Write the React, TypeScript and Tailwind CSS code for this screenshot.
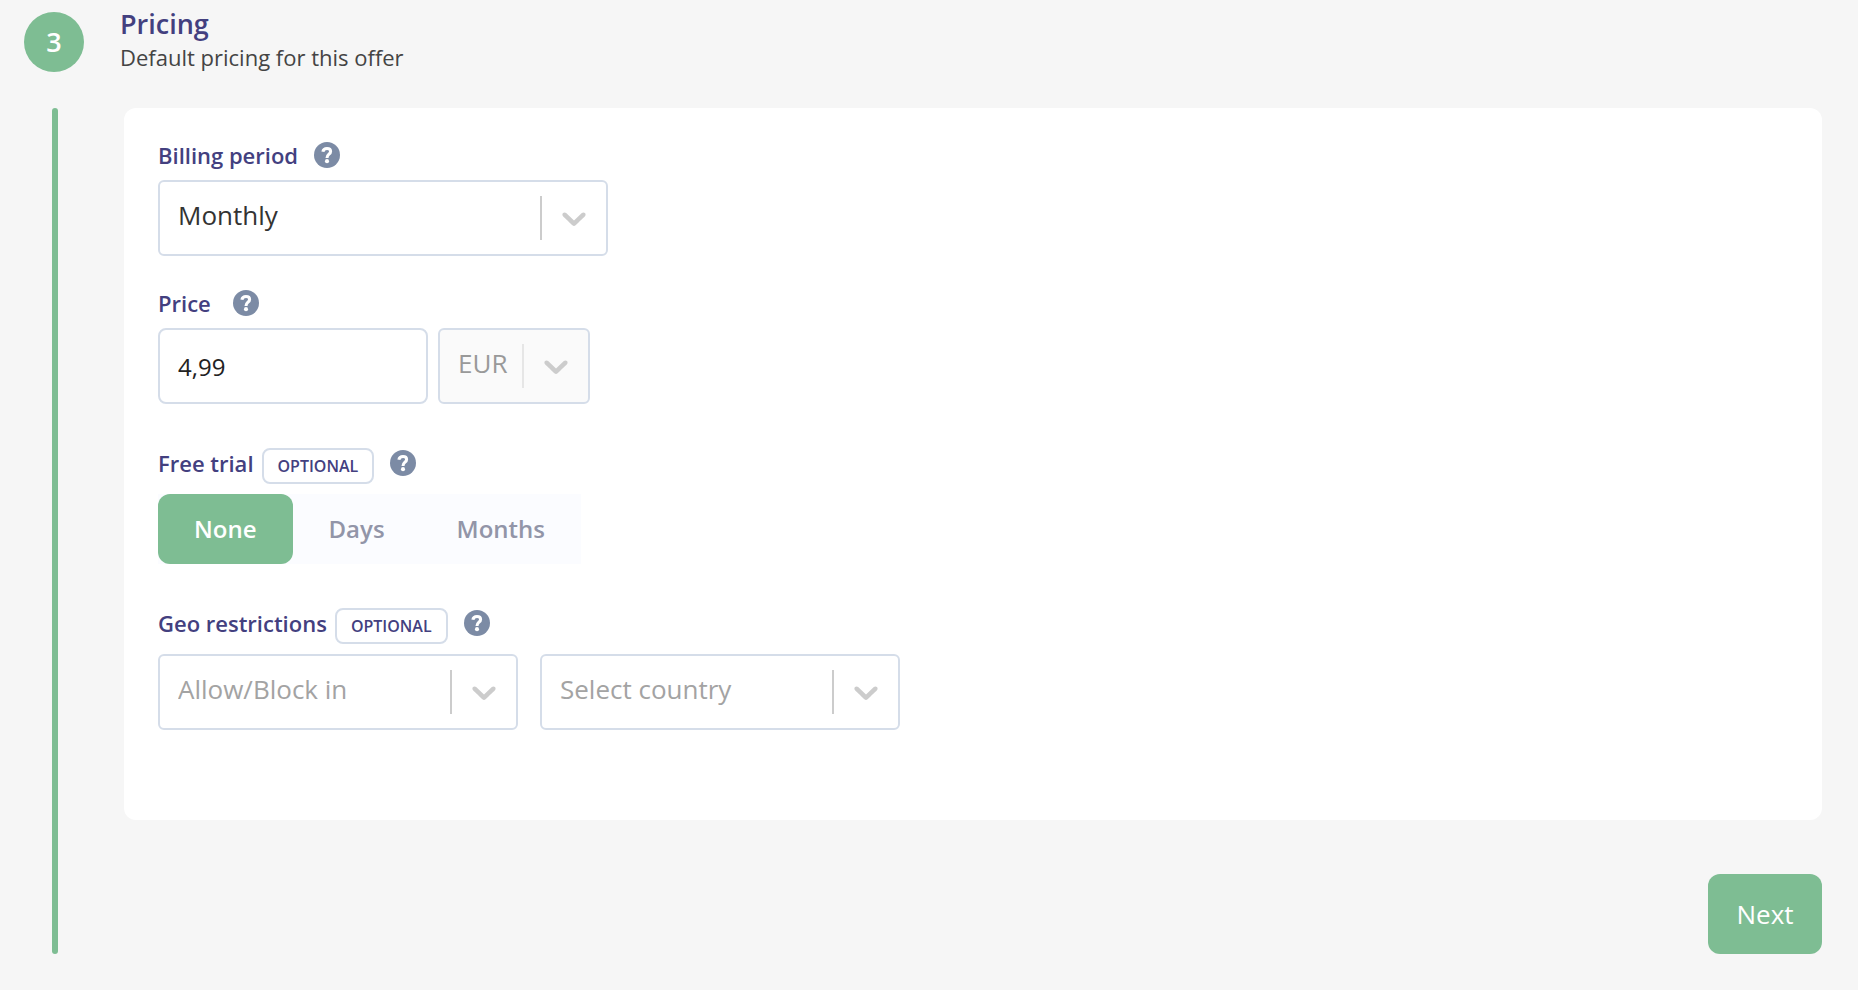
import { useState } from 'react';
import type { ReactNode } from 'react';
import clsx from 'clsx';

const trialOptions = ['None', 'Days', 'Months'];

function Help({ topic }: { topic: string }) {
  return (
    <button type="button" aria-label={`Help: ${topic}`}>
      <svg viewBox="0 0 76 76" className="size-6.5" fill="none" aria-hidden="true">
        <circle cx="38" cy="38" r="38" fill="#7c8ba5" />
        <path
          d="M26 28.5C27 22 32 19 38 19C44.500 19 48.500 22.500 48.500 27.500C48.500 36 38 35.500 38 46.500"
          stroke="white"
          strokeWidth="9"
        />
        <circle cx="38" cy="56" r="6" fill="white" />
      </svg>
    </button>
  );
}

function OptionalBadge() {
  return (
    <span className="mt-1.5 rounded-lg border-2 border-[#d5dde9] px-3.5 text-base leading-8 font-semibold uppercase">
      Optional
    </span>
  );
}

function Select({
  id,
  label,
  options,
  disabled = false,
  placeholder,
  className,
}: {
  id: string;
  label?: string;
  options: string[];
  disabled?: boolean;
  placeholder?: string;
  className: string;
}) {
  const [value, setValue] = useState(placeholder ? '' : options[0]);

  return (
    <div className={clsx('relative', className)}>
      <select
        id={id}
        aria-label={label}
        value={value}
        disabled={disabled}
        onChange={(e) => setValue(e.target.value)}
        className={clsx(
          'h-19 w-full appearance-none rounded-md border-2 border-[#d5dde9] pr-16 pb-1.5 pl-4.5 text-[26px] opacity-100',
          disabled ? 'bg-[#fafafa] text-[#999999]' : 'bg-white',
          !disabled && (value ? 'text-[#333333]' : 'text-[#a3a3a3]')
        )}
      >
        {placeholder && <option value="">{placeholder}</option>}
        {options.map((option) => (
          <option key={option} value={option}>
            {option}
          </option>
        ))}
      </select>
      <div className="pointer-events-none absolute inset-y-0 right-0.5 flex items-center text-[#cccccc]">
        <span className={clsx('h-11 w-0.5', disabled ? 'bg-[#e6e6e6]' : 'bg-[#cccccc]')} />
        <svg viewBox="0 0 20 20" className="mx-3 size-10" fill="currentColor" aria-hidden="true">
          <path d="M4.516 7.548c0.436-0.446 1.043-0.481 1.576 0l3.908 3.747 3.908-3.747c0.533-0.481 1.141-0.446 1.574 0 0.436 0.445 0.408 1.197 0 1.615-0.406 0.418-4.695 4.502-4.695 4.502-0.217 0.223-0.502 0.335-0.787 0.335s-0.57-0.112-0.789-0.335c0 0-4.287-4.084-4.695-4.502s-0.436-1.17 0-1.615z" />
        </svg>
      </div>
    </div>
  );
}

function FieldLabel({ children, className }: { children: ReactNode; className: string }) {
  return (
    <div className={clsx('flex h-9.5 items-center text-[22px] leading-8 font-semibold text-[#43407f]', className)}>
      {children}
    </div>
  );
}

export default function App() {
  const [price, setPrice] = useState('4,99');
  const [trial, setTrial] = useState('None');

  return (
    <div className="min-h-screen bg-[#f6f6f6] px-6 pt-3 pb-9 font-['Open_Sans',sans-serif] text-[#333333]">
      <header className="flex items-start">
        <div className="flex size-15 items-center justify-center rounded-full bg-[#7ebd93] text-[27px] font-semibold text-white">
          3
        </div>
        <div className="ml-9 -mt-1">
          <h2 className="text-[27px] leading-8 font-semibold text-[#43407f]">Pricing</h2>
          <p className="text-[22px] leading-8.5 text-[#444444]">Default pricing for this offer</p>
        </div>
      </header>

      <div className="mt-8.5 flex">
        <div className="ml-7 w-1.5 shrink-0 rounded-full bg-[#7ebd93]" />
        <form className="ml-16.5 mr-3 flex-1" onSubmit={(e) => e.preventDefault()}>
          <div className="rounded-xl bg-white px-8.5 pt-7 pb-22.5">
            <FieldLabel className="mb-1.5">
              <label htmlFor="billing" className="mr-4">
                Billing period
              </label>
              <Help topic="Billing period" />
            </FieldLabel>
            <Select id="billing" options={['Monthly', 'Yearly']} className="w-112.5" />

            <div className="mt-7">
              <FieldLabel className="mb-1.5">
                <label htmlFor="price" className="mr-5.5">
                  Price
                </label>
                <Help topic="Price" />
              </FieldLabel>
              <div className="flex gap-2.5">
                <input
                  id="price"
                  type="text"
                  inputMode="decimal"
                  value={price}
                  onChange={(e) => setPrice(e.target.value)}
                  className="h-19 w-67.5 rounded-lg border-2 border-[#d5dde9] bg-white px-4.5 text-2xl text-[#222222]"
                />
                <Select id="currency" label="Currency" options={['EUR']} disabled className="w-38" />
              </div>
            </div>

            <div className="mt-10">
              <FieldLabel className="mb-3">
                <span id="trial-label" className="mr-2">
                  Free trial
                </span>
                <OptionalBadge />
                <span className="ml-4 flex">
                  <Help topic="Free trial" />
                </span>
              </FieldLabel>
              <div role="group" aria-labelledby="trial-label" className="flex w-fit bg-[#fbfcff]">
                {trialOptions.map((option) => (
                  <button
                    key={option}
                    type="button"
                    aria-pressed={trial === option}
                    onClick={() => setTrial(option)}
                    className={clsx(
                      'h-17.5 rounded-xl px-9 text-2xl font-semibold',
                      trial === option ? 'bg-[#7ebd93] text-white' : 'text-[#9295a8]'
                    )}
                  >
                    {option}
                  </button>
                ))}
              </div>
            </div>

            <div className="mt-10">
              <FieldLabel className="mb-3">
                <label htmlFor="geo-mode" className="mr-2">
                  Geo restrictions
                </label>
                <OptionalBadge />
                <span className="ml-4 flex">
                  <Help topic="Geo restrictions" />
                </span>
              </FieldLabel>
              <div className="flex gap-5.5">
                <Select
                  id="geo-mode"
                  placeholder="Allow/Block in"
                  options={['Allow in', 'Block in']}
                  className="w-90"
                />
                <Select
                  id="geo-country"
                  label="Country"
                  placeholder="Select country"
                  options={['France', 'Germany', 'Spain']}
                  className="w-90"
                />
              </div>
            </div>
          </div>

          <div className="mt-13.5 flex justify-end">
            <button type="submit" className="h-20 w-28.5 rounded-xl bg-[#7ebd93] text-[26px] text-white">
              Next
            </button>
          </div>
        </form>
      </div>
    </div>
  );
}
